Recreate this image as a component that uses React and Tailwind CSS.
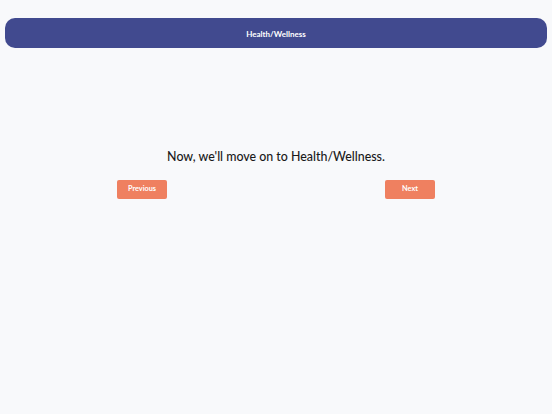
export default function App() {
  return (
    <div
      className="min-h-[414px] w-full bg-[#f8f9fb] px-[5px] pt-[18px]"
      style={{ fontFamily: "Lato, 'Noto Sans', sans-serif" }}
    >
      <div className="flex h-[30px] items-center justify-center rounded-[10px] bg-[#414a8f]">
        <span className="pt-[1px] text-[8px] font-bold text-white">Health/Wellness</span>
      </div>

      <div className="mx-auto mt-[99px] flex w-[318px] flex-col">
        <p className="text-center text-[12.4px] font-medium leading-[20px] text-[#1a1a1a]">
          Now, we'll move on to Health/Wellness.
        </p>
        <div className="mt-[13px] flex justify-between">
          <button className="flex h-[19px] w-[50px] items-center justify-center rounded-[2px] bg-[#ef8060] text-[7.3px] font-bold text-white">
            Previous
          </button>
          <button className="flex h-[19px] w-[50px] items-center justify-center rounded-[2px] bg-[#ef8060] text-[7.3px] font-bold text-white">
            Next
          </button>
        </div>
      </div>
    </div>
  );
}
